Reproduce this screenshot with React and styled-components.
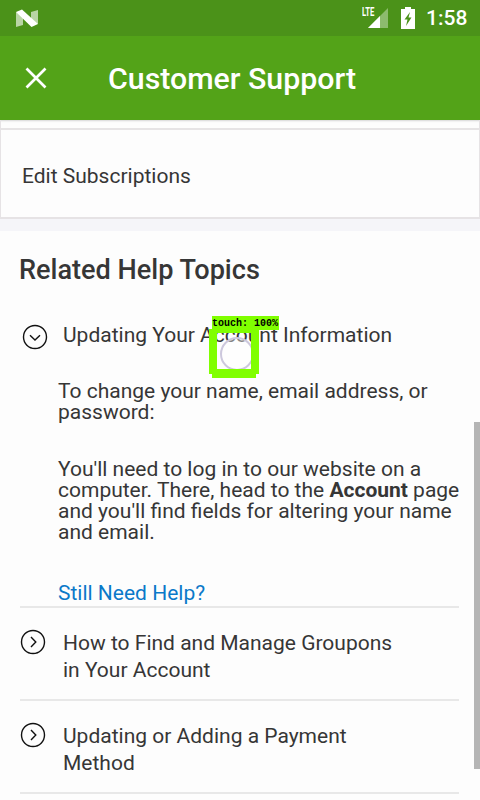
import React from "react";
import styled, { createGlobalStyle } from "styled-components";

const Global = createGlobalStyle`
  * { box-sizing: border-box; }
  body { margin: 0; background: #fdfdfd; }
`;

const Screen = styled.div`
  position: relative;
  display: flex;
  flex-direction: column;
  width: 480px;
  height: 800px;
  overflow: hidden;
  background: #fdfdfd;
  color: #363636;
  font-family: Roboto, "Liberation Sans", sans-serif;
`;

const StatusBar = styled.header`
  display: flex;
  flex: none;
  align-items: center;
  height: 36px;
  padding: 0 12px 0 16px;
  background: #4b9219;
  color: #fff;
`;

const StatusIcons = styled.div`
  display: flex;
  align-items: center;
  margin-left: auto;
`;

const Network = styled.div`
  display: flex;
  align-items: flex-start;
  width: 39px;
  height: 24px;
`;

const NetworkLabel = styled.span`
  width: 13px;
  margin-right: -8px;
  font-size: 12px;
  font-weight: 700;
  line-height: 12px;
  transform: scaleX(0.64);
  transform-origin: left;
`;

const Clock = styled.span`
  width: 42px;
  margin-left: 11px;
  font-size: 21px;
  font-weight: 500;
  line-height: 36px;
  white-space: nowrap;
`;

const AppBar = styled.div`
  display: flex;
  flex: none;
  align-items: center;
  height: 84px;
  padding-left: 25px;
  gap: 61px;
  background: #53a318;
  color: #fff;
`;

const AppTitle = styled.h1`
  margin: 2px 0 0;
  font-size: 30.3px;
  font-weight: 500;
  line-height: 36px;
`;

const OptionsGroup = styled.section`
  flex: none;
  height: 111px;
  padding-bottom: 12px;
  background: #f5f5f9;
`;

const OptionsCard = styled.div`
  height: 99px;
  padding-top: 8px;
  border: solid #e6e3e5;
  border-width: 0 1px 2px 1px;
  background: #fdfdfd;
  box-shadow: inset 0 3px 2px -2px #d5d5d5;
`;

const Option = styled.div`
  height: 89px;
  padding-left: 21px;
  border-top: 2px solid #e6e4e5;
  font-size: 21px;
  line-height: 92px;
`;

const Topics = styled.main`
  padding: 0 21px 0 20px;
`;

const TopicsTitle = styled.h2`
  margin: 0 0 0 -1px;
  height: 77px;
  font-size: 27.1px;
  font-weight: 500;
  line-height: 79px;
`;

const Topic = styled.section`
  height: ${(p) => p.$height}px;
  border-bottom: 2px solid #e8e8e8;
`;

const TopicHeader = styled.div`
  display: flex;
  padding-top: ${(p) => p.$top}px;
  padding-left: ${(p) => p.$inset || 0}px;
`;

const TopicIcon = styled.svg`
  flex: none;
  width: 26px;
  height: 26px;
  margin-top: ${(p) => p.$drop || 0}px;
`;

const TopicName = styled.div`
  margin-left: ${(p) => p.$gap}px;
  font-size: 21px;
  line-height: 27px;
`;

const Answer = styled.div`
  padding: 31px 0 0 38px;
  font-size: 21px;
  line-height: 21px;
  white-space: nowrap;
`;

const Paragraph = styled.p`
  margin: 0 0 ${(p) => p.$after}px;
`;

const HelpLink = styled.a`
  display: block;
  color: #0b79c9;
`;

const ScrollThumb = styled.div`
  position: absolute;
  top: 422px;
  right: 0;
  width: 6px;
  height: 347px;
  background: #b5b5b5;
`;

const TouchMarker = styled.div`
  position: absolute;
  top: 316px;
  left: 209px;
  width: 70px;
  height: 62px;
`;

const TouchLabel = styled.div`
  position: absolute;
  top: 1px;
  left: 3px;
  width: 67px;
  height: 13px;
  color: #000;
  font: 700 10px/13px "Liberation Mono", monospace;
  white-space: pre;
`;

const NIcon = () => (
  <svg width="22" height="19" viewBox="0 0 22 19">
    <path d="M0 3L7 6V16L0 18ZM15 3L22 1V15L15 13Z" fill="#b9d5a5" />
    <path d="M0 3L6 0.5L22 15L15.5 18Z" fill="#fff" />
  </svg>
);

const chevrons = { down: "M8 11.2L13 16L18 11.2", right: "M11 8L15.8 13L11 18" };

const CircleChevron = ({ direction, drop }) => (
  <TopicIcon $drop={drop} viewBox="0 0 26 26" fill="none" stroke="#111" strokeWidth="1.4">
    <circle cx="13" cy="13" r="11.5" />
    <path d={chevrons[direction]} />
  </TopicIcon>
);

export default function App() {
  return (
    <Screen>
      <Global />
      <StatusBar>
        <NIcon />
        <StatusIcons>
          <Network>
            <NetworkLabel>LTE</NetworkLabel>
            <svg width="22" height="24" viewBox="0 0 22 24">
              <path d="M21 2V22H1Z" fill="#8dbb6e" />
              <path d="M13 10V22H1Z" fill="#fff" />
            </svg>
          </Network>
          <svg width="14" height="22" viewBox="0 0 14 22">
            <path d="M4 0H10V2H14V22H0V2H4Z" fill="#fff" />
            <path d="M9 5L3.5 12.5H6.5L5 19L10.5 10.5H7.5Z" fill="#4b9219" />
          </svg>
          <Clock>1:58</Clock>
        </StatusIcons>
      </StatusBar>
      <AppBar>
        <svg width="22" height="22" viewBox="0 0 22 22" stroke="#fff" strokeWidth="2.7">
          <path d="M1.5 1.5L20.5 20.5M20.5 1.5L1.5 20.5" />
        </svg>
        <AppTitle>Customer Support</AppTitle>
      </AppBar>
      <OptionsGroup>
        <OptionsCard>
          <Option>Edit Subscriptions</Option>
        </OptionsCard>
      </OptionsGroup>
      <Topics>
        <TopicsTitle>Related Help Topics</TopicsTitle>
        <Topic $height={300}>
          <TopicHeader $top={14} $inset={2}>
            <CircleChevron direction="down" drop={2} />
            <TopicName $gap={15}>Updating Your Account Information</TopicName>
          </TopicHeader>
          <Answer>
            <Paragraph $after={36}>
              To change your name, email address, or
              <br />
              password:
            </Paragraph>
            <Paragraph $after={40}>
              You'll need to log in to our website on a<br />
              computer. There, head to the <b>Account</b> page
              <br />
              and you'll find fields for altering your name
              <br />
              and email.
            </Paragraph>
            <HelpLink>Still Need Help?</HelpLink>
          </Answer>
        </Topic>
        <Topic $height={93}>
          <TopicHeader $top={22}>
            <CircleChevron direction="right" drop={-1} />
            <TopicName $gap={17}>
              How to Find and Manage Groupons
              <br />
              in Your Account
            </TopicName>
          </TopicHeader>
        </Topic>
        <Topic $height={93}>
          <TopicHeader $top={22}>
            <CircleChevron direction="right" drop={-1} />
            <TopicName $gap={17}>
              Updating or Adding a Payment
              <br />
              Method
            </TopicName>
          </TopicHeader>
        </Topic>
      </Topics>
      <ScrollThumb />
      <TouchMarker>
        <svg width="70" height="62" viewBox="0 0 70 62">
          <circle cx="28" cy="38" r="16" fill="#fff" fillOpacity=".4" stroke="#cdc8dd" strokeWidth="2" />
          <path fill="#80ff00" d="M3 0H70V14H50V58H47V62H3V58H0V13H3ZM8 17V53H42V17Z" fillRule="evenodd" />
        </svg>
        <TouchLabel>touch: 100%</TouchLabel>
      </TouchMarker>
    </Screen>
  );
}
